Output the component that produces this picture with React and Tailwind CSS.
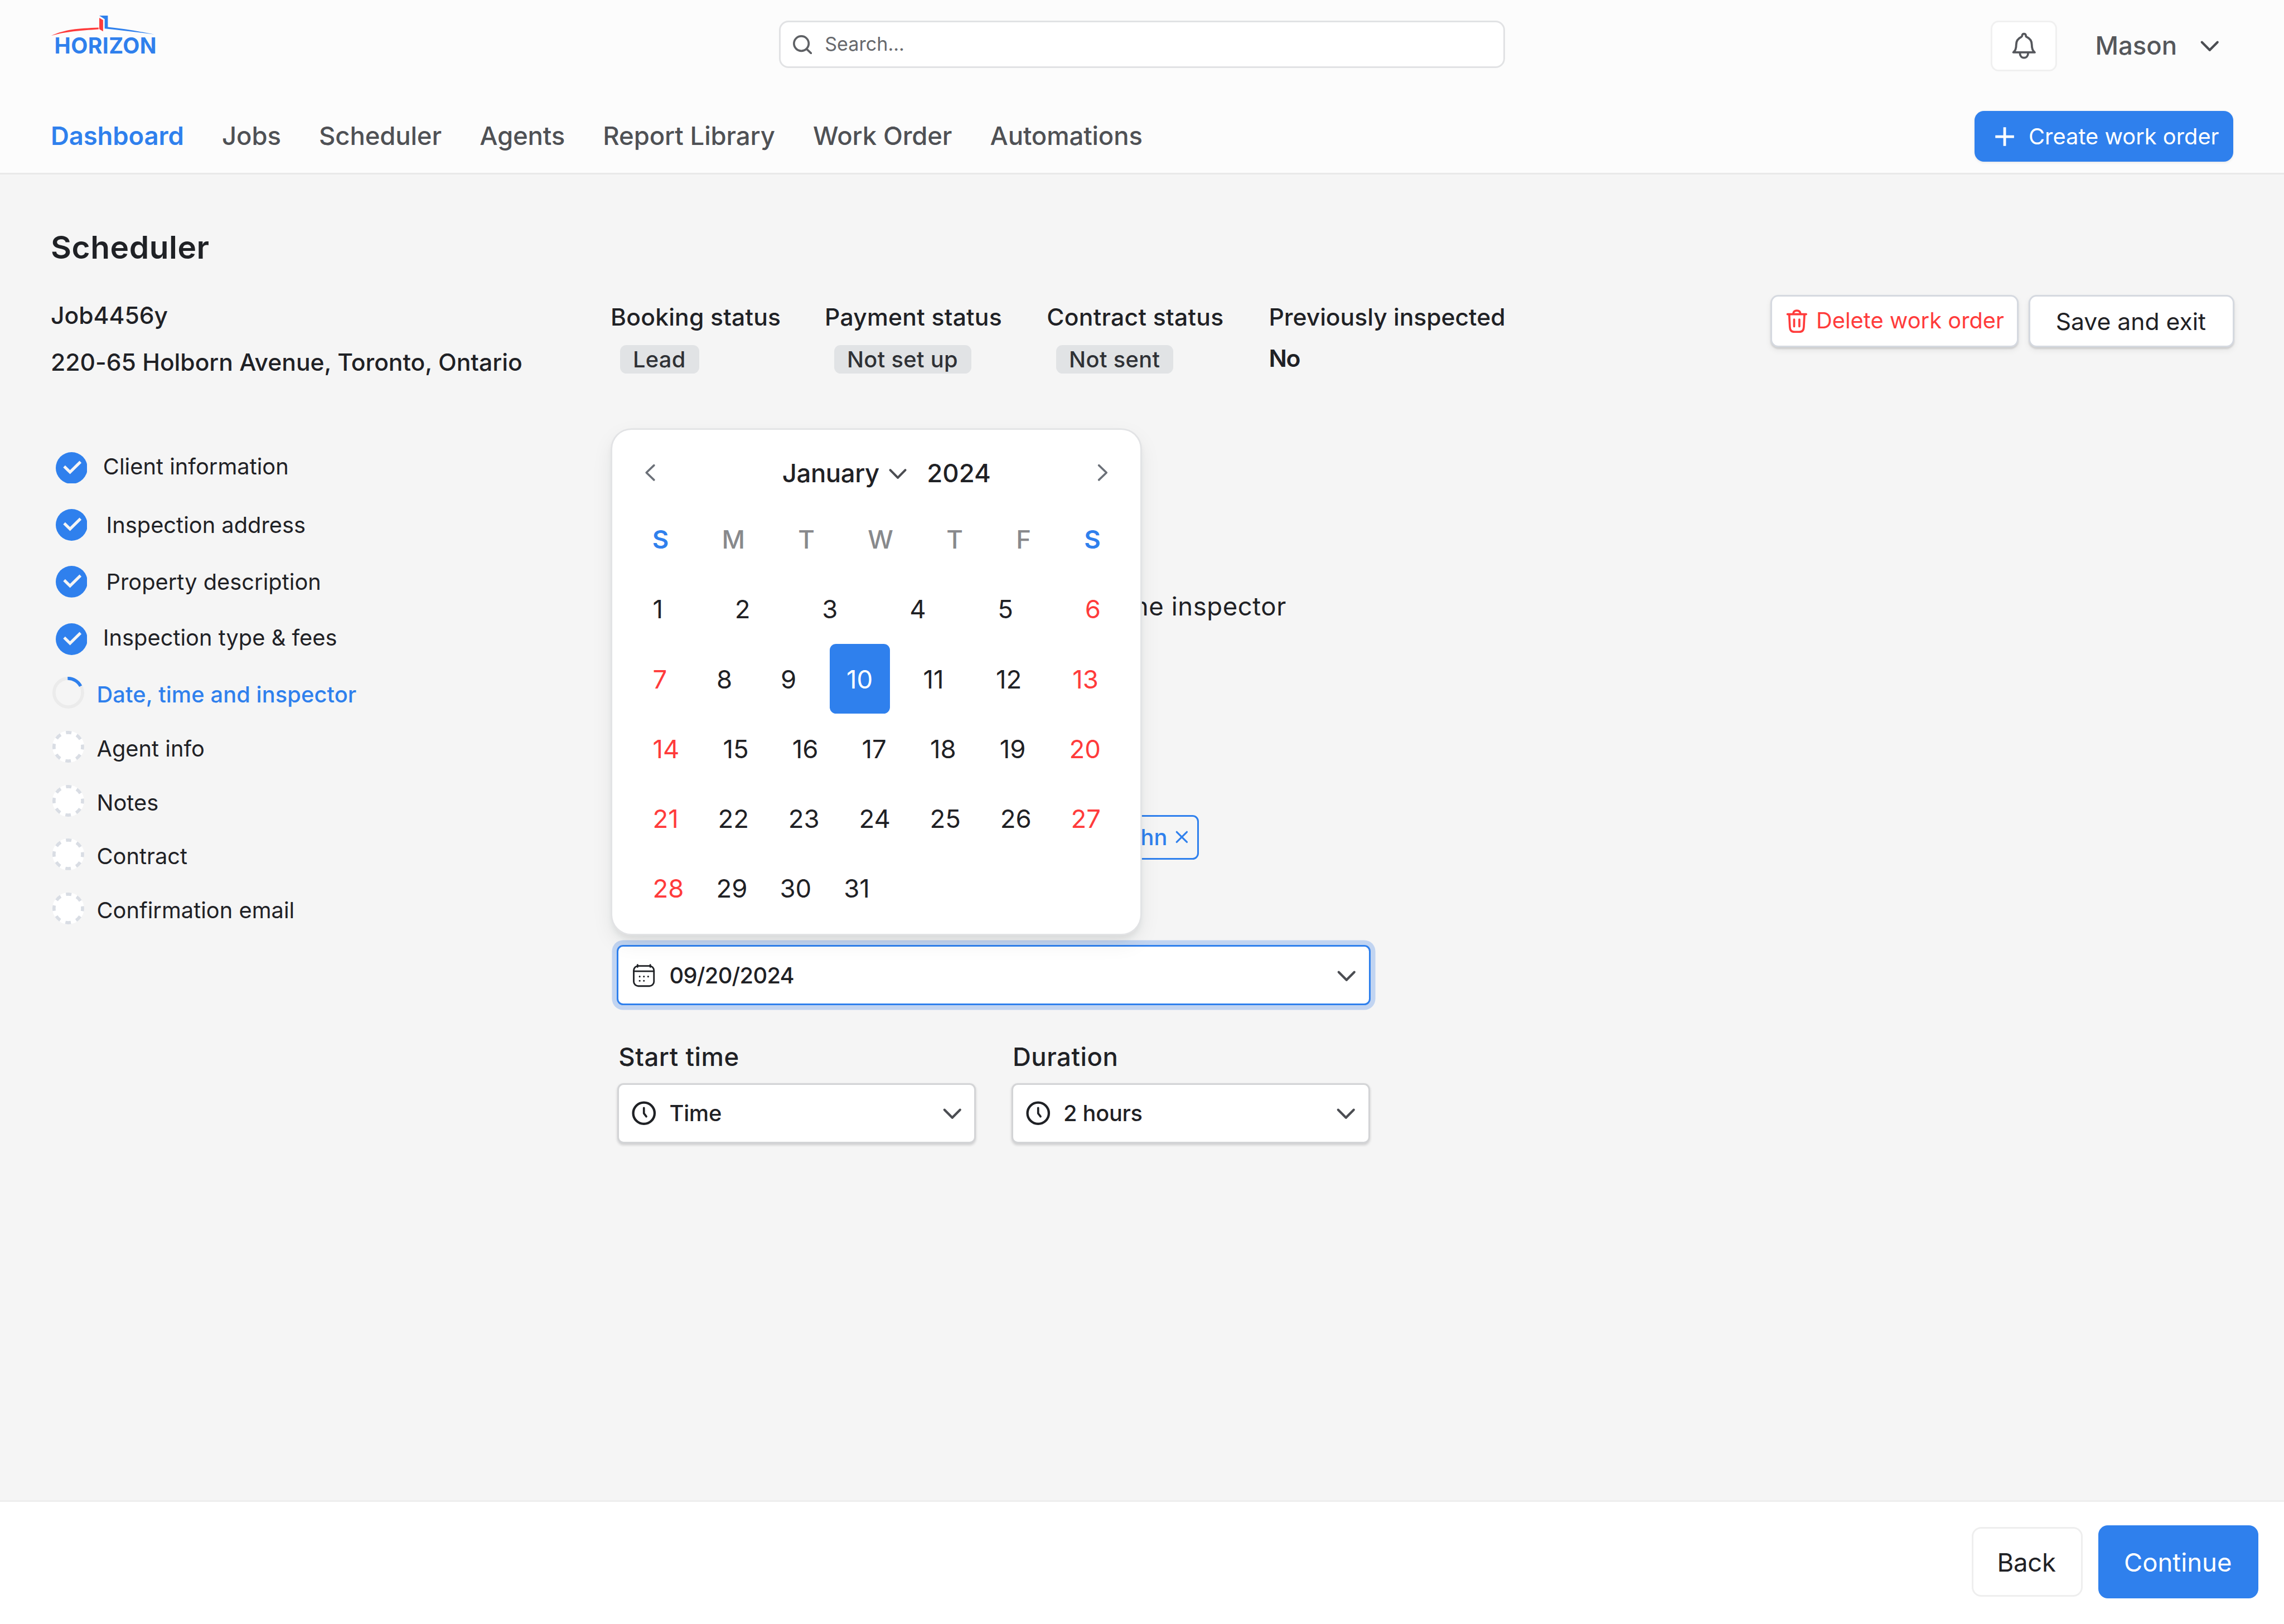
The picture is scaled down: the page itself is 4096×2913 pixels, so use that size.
import { useState } from "react";

// --- DATA ---
const navItems = ["Dashboard", "Jobs", "Scheduler", "Agents", "Report Library", "Work Order", "Automations"];

const statuses = [
  { label: "Booking status", value: "Lead", badge: true, width: "w-[135px] tracking-[0.004em]" },
  { label: "Payment status", value: "Not set up", badge: true, width: "w-[140px] tracking-[0.005em]" },
  { label: "Contract status", value: "Not sent", badge: true, width: "w-[140px] tracking-[0.006em]" },
  { label: "Previously inspected", value: "No", badge: false, width: "w-[160px] tracking-[-0.001em]" },
];

const steps = [
  { label: "Client information", state: "done", text: "ml-[10px] pb-[1.4px]" },
  { label: "Inspection address", state: "done", text: "ml-[12px] pt-[0.8px]" },
  { label: "Property description", state: "done", text: "ml-[12px] pt-[0.6px]" },
  { label: "Inspection type & fees", state: "done", text: "ml-[10px] pb-[1.4px]" },
  { label: "Date, time and inspector", state: "current", text: "ml-[8px] pt-[2.6px] font-medium tracking-[0.002em] text-[#2f80ed]" },
  { label: "Agent info", state: "todo", text: "ml-[8px] pt-[2.8px]" },
  { label: "Notes", state: "todo", text: "ml-[8px] pt-[2.8px]" },
  { label: "Contract", state: "todo", text: "ml-[8px] pt-[2.8px]" },
  { label: "Confirmation email", state: "todo", text: "ml-[8px] pt-[2.8px]" },
];

const weekDays = ["S", "M", "T", "W", "T", "F", "S"];

const weeks = [
  { days: [1, 2, 3, 4, 5, 6], layout: "flex justify-between" },
  { days: [7, 8, 9, 10, 11, 12, 13], layout: "grid grid-cols-[40.3px_40.4px_30.8px_59px_45.9px_48.3px_auto] justify-items-start" },
  { days: [14, 15, 16, 17, 18, 19, 20], layout: "flex justify-between" },
  { days: [21, 22, 23, 24, 25, 26, 27], layout: "flex justify-between" },
  { days: [28, 29, 30, 31], layout: "flex gap-[20.4px]" },
];

const weekendDays = [6, 7, 13, 14, 20, 21, 27, 28];

// --- ICONS ---
const ChevronDown = ({ className = "size-4 text-[#4b4d52]" }) => (
  <svg className={`shrink-0 ${className}`} viewBox="0 0 16 16" fill="none" stroke="currentColor" strokeWidth="1.5" strokeLinecap="round" strokeLinejoin="round">
    <path d="M3.1 5.5 8 10.5l4.9-5" />
  </svg>
);

const ChevronSide = ({ right }) => (
  <svg className="size-4 shrink-0 text-[#6b7078]" viewBox="0 0 16 16" fill="none" stroke="currentColor" strokeWidth="1.3" strokeLinecap="round" strokeLinejoin="round">
    <path d={right ? "M5.5 3.4 10.3 8l-4.8 4.6" : "M10.5 3.4 5.7 8l4.8 4.6"} />
  </svg>
);

const BellIcon = () => (
  <svg className="h-[18px] w-4" viewBox="96 32 192 216" fill="none" stroke="#55575c" strokeWidth="16" strokeLinejoin="round">
    <path d="M111 188h162c-15-11-22-26-22-58 0-27-13-47-37-58-6-3-8-7-8-12-1-8-6-13-14-13s-13 5-14 13c0 5-2 9-8 12-24 11-37 31-37 58 0 32-7 47-22 58Z" />
    <path d="M161 192c0 23 13 37 31 37s31-14 31-37" />
  </svg>
);

const CalendarIcon = () => (
  <svg className="size-4 shrink-0" viewBox="96 84 192 192" fill="none" stroke="#1f2125" strokeWidth="12" strokeLinecap="round">
    <rect x="115" y="108" width="153" height="152" rx="34" />
    <path d="M115 148h153M144 100v16M240 100v16" />
    <g fill="#1f2125" stroke="none">
      <circle cx="160" cy="188" r="6.5" />
      <circle cx="192" cy="188" r="6.5" />
      <circle cx="224" cy="188" r="6.5" />
      <circle cx="160" cy="220" r="6.5" />
      <circle cx="192" cy="220" r="6.5" />
    </g>
  </svg>
);

const ClockIcon = () => (
  <svg className="size-4 shrink-0" viewBox="0 0 16 16" fill="none" stroke="#1f2125" strokeWidth="1.5" strokeLinecap="round" strokeLinejoin="round">
    <circle cx="8" cy="8" r="6.75" />
    <path d="M8 4.7V8.1l1.5 2" strokeWidth="1.3" />
  </svg>
);

const TrashIcon = () => (
  <svg className="h-[15px] w-[13.5px] shrink-0" viewBox="0 0 13.5 15" fill="none" stroke="#ff3b3b" strokeWidth="1.3" strokeLinecap="round" strokeLinejoin="round">
    <path d="M.9 3h11.8M4.5 2.8C4.6 1.5 5.5.75 6.8.75S9 1.5 9.1 2.8M2 3.2l.4 7.9c.1 2.1 1 3.1 2.9 3.1h3c1.9 0 2.8-1 2.9-3.1l.4-7.9M5.1 6.4v4.3M8.4 6.4v4.3" />
  </svg>
);

const StepIcon = ({ state }) => {
  if (state === "done") {
    return (
      <svg className="size-5 shrink-0" viewBox="0 0 20 20" fill="none">
        <circle cx="10" cy="10" r="10" fill="#2f80ed" />
        <path d="M5.3 9 9 12.6l6.6-6.5" stroke="#f5f5f5" strokeWidth="1.8" />
      </svg>
    );
  }
  if (state === "current") {
    return (
      <svg className="size-5 shrink-0" viewBox="0 0 20 20" fill="none" strokeWidth="2">
        <circle cx="10" cy="10" r="9" stroke="#ebebeb" />
        <path d="M9.6 1A9 9 0 0 1 17.8 5.9" stroke="#2f80ed" />
      </svg>
    );
  }
  return (
    <svg className="size-5 shrink-0" viewBox="0 0 20 20" fill="none">
      <circle cx="10" cy="10" r="10" fill="#fff" />
      <circle cx="10" cy="10" r="9" stroke="#d9dde4" strokeWidth="2" strokeDasharray="3.534 3.534" strokeDashoffset="1.767" />
    </svg>
  );
};

const Logo = () => (
  <div className="-mt-[3px] flex w-[66px] flex-col">
    <svg className="h-[13px] w-[66px]" viewBox="32 10 66 13">
      <path d="M62.6 10H68v7.2c9 .9 19.5 2.6 29.5 4.7-11-1.5-21-2.6-31.5-3.7v-6l-3.4-2.2Z" fill="#2f80ed" />
      <path d="M62.6 11.4 65 12.8v7.1l-2.4-1.4Z" fill="#ff3b3b" />
      <path d="M32.3 22.7C41 18.7 49 18.1 62.2 17.6v1C50 19.5 42 19.9 32.3 22.7Z" fill="#ff3b3b" />
    </svg>
    <span className="mt-[0.3px] ml-[2.3px] text-[13.75px] leading-[11.5px] font-bold tracking-[0.01em] text-[#2f80ed]">HORIZON</span>
  </div>
);

// --- HEADER ---
const Header = () => (
  <header className="h-[110px] border-b-[1.06px] border-[#e9e9e9] bg-[#fcfcfc]">
    <div className="flex h-[70px] items-start pt-[13px] pr-[39px] pl-8">
      <Logo />
      <div className="ml-[393px] flex h-[30px] w-[458px] items-center gap-2 rounded-[6px] border-[1.06px] border-[#e1e2e4] bg-white pl-2">
        <svg className="size-3" viewBox="0 0 12 12" fill="none" stroke="#5f6165" strokeWidth="1.3" strokeLinecap="round">
          <circle cx="5.3" cy="5.3" r="4.65" />
          <path d="m8.9 9 2.5 2.4" />
        </svg>
        <span className="pb-[0.6px] text-[12px] leading-4 text-[#66686c]">Search...</span>
      </div>
      <button className="ml-[306px] flex h-8 w-[42px] items-center justify-center rounded-[5px] border-[1.06px] border-[#f0f0f0] bg-white">
        <BellIcon />
      </button>
      <div className="ml-6 flex h-8 flex-1 items-center justify-between text-[16px] font-medium text-[#55575b]">
        <span className="leading-6">Mason</span>
        <ChevronDown />
      </div>
    </div>
    <div className="flex h-8 items-center justify-between px-8">
      <nav className="flex gap-6 pb-[0.5px] text-[16px] leading-6 tracking-[-0.003em]">
        {navItems.map((item, i) => (
          <a key={item} className={i === 0 ? "font-semibold text-[#2f80ed]" : "font-medium text-[#4f5155]"}>
            {item}
          </a>
        ))}
      </nav>
      <button className="flex h-8 w-[163px] items-center gap-[9px] rounded-[6px] bg-[#2f80ed] pl-[13px] text-[14px] text-white shadow-[0_0.5px_1.5px_rgba(0,0,0,0.08)]">
        <svg className="size-3" viewBox="0 0 12 12" stroke="#fff" strokeWidth="1.7">
          <path d="M6 .1v11.8M.1 6h11.8" />
        </svg>
        Create work order
      </button>
    </div>
  </header>
);

// --- CALENDAR POPOVER ---
const CalendarPopover = ({ selected, onSelect }) => (
  <div className="absolute top-[29px] -left-[3px] z-10 h-[318px] w-[333px] rounded-[12px] bg-white pr-[25px] pl-[25.5px] shadow-[0_0_0_1px_#e2e3e5,0_3px_4px_rgba(31,33,37,0.08),0_5px_14px_rgba(31,33,37,0.08)]">
    <div className="mt-[11px] mb-1 -mr-[9.3px] -ml-[9.8px] flex h-8 items-center text-[16px] leading-6 font-medium text-[#1f2125]">
      <ChevronSide />
      <span className="ml-[75.5px] pt-[1px] tracking-[-0.01em]">January</span>
      <ChevronDown className="mt-[1.6px] ml-[3.8px] size-[15.5px] text-[#4b4d52]" />
      <span className="ml-[10.8px] pt-[1px]">2024</span>
      <span className="ml-auto">
        <ChevronSide right />
      </span>
    </div>
    <div className="-ml-[0.3px] flex h-11 items-center justify-between pt-[1px] text-[16px] font-medium text-[#88898c]">
      {weekDays.map((day, i) => (
        <span key={i} className={day === "S" ? "font-semibold text-[#2f80ed]" : ""}>
          {day}
        </span>
      ))}
    </div>
    {weeks.map(({ days, layout }) => (
      <div key={days[0]} className={`h-11 items-center text-[16px] text-[#1f2125] ${layout}`}>
        {days.map((day) => (
          <button
            key={day}
            onClick={() => onSelect(day)}
            className={
              selected === day
                ? "h-11 w-[38px] rounded-[4px] bg-[#2f80ed] pt-[1px] text-white"
                : weekendDays.includes(day)
                  ? "pt-[1px] text-[#ff3b3b]"
                  : "pt-[1px]"
            }
          >
            {day}
          </button>
        ))}
      </div>
    ))}
  </div>
);

const TimeSelect = ({ label, value }) => (
  <div className="w-[226px]">
    <p className="ml-[0.7px] pt-[0.6px] text-[16px] leading-6 font-medium tracking-[0.012em]">{label}</p>
    <div className="mt-[4.4px] flex h-[38px] items-center rounded-[4px] border-[1.06px] border-[#d3d4d6] bg-white pr-[6px] pl-[7.7px] shadow-[0_1px_1.5px_rgba(31,33,37,0.18)]">
      <ClockIcon />
      <span className="ml-2 text-[14px] font-medium tracking-[-0.008em]">{value}</span>
      <ChevronDown className="mt-px ml-auto size-4 text-[#4b4d52]" />
    </div>
  </div>
);

export default function App() {
  const [selectedDay, setSelectedDay] = useState(10);

  return (
    <div className="flex h-[1024.1px] w-[1440px] flex-col overflow-hidden bg-[#f5f5f5] font-['Inter',sans-serif] text-[#1f2125] [zoom:2.84444]">
      <Header />

      <main className="h-[836px] pt-8 pr-[31.4px] pl-8">
        <h1 className="text-[20px] leading-7 font-semibold tracking-[0.009em]">Scheduler</h1>

        {/* Job summary */}
        <div className="mt-4 flex h-14 items-start">
          <div className="w-[353px] pt-[0.9px] text-[15px] leading-6 font-medium tracking-[-0.001em]">
            <p>Job4456y</p>
            <p className="mt-[5.8px]">220-65 Holborn Avenue, Toronto, Ontario</p>
          </div>
          {statuses.map((s) => (
            <div key={s.label} className={`${s.width} pt-[2.2px] text-[15px] font-medium whitespace-nowrap`}>
              <p className="leading-6">{s.label}</p>
              {s.badge ? (
                <span className="mt-[5.3px] ml-[6px] block h-[18px] w-fit rounded-[4px] bg-[#e1e3e5] pr-[8.4px] pl-2 text-[14px] leading-[18px] tracking-[0.008em] text-[#2f3135]">
                  {s.value}
                </span>
              ) : (
                <span className="mt-[4.8px] block leading-[18px] font-semibold tracking-[-0.03em]">{s.value}</span>
              )}
            </div>
          ))}
          <div className="ml-auto flex gap-[6.5px]">
            <button className="flex h-[33px] w-[156.4px] items-center gap-[5.5px] rounded-[5px] border-[1.06px] border-[#d5d9e0] bg-white pl-[8.8px] text-[14px] whitespace-nowrap text-[#ff3b3b] shadow-[0_1px_1px_rgba(0,0,0,0.12),0_2px_4px_rgba(0,0,0,0.06)]">
              <TrashIcon />
              <span className="pb-[1px]">Delete work order</span>
            </button>
            <button className="h-[33px] w-[129.5px] rounded-[5px] border-[1.06px] border-[#d5d9e0] bg-white pt-[0.6px] pr-[0.8px] text-[15px] shadow-[0_1px_1px_rgba(0,0,0,0.12),0_2px_4px_rgba(0,0,0,0.06)]">
              Save and exit
            </button>
          </div>
        </div>

        <div className="flex items-start">
          {/* Steps */}
          <ul className="w-[357px] pt-[43px]">
            {steps.map((step) => (
              <li
                key={step.label}
                className={
                  step.state === "done"
                    ? "mb-4 ml-[3px] flex h-5 items-center text-[14px] leading-5 nth-[4]:mb-[14px]"
                    : "mb-[14px] ml-px flex h-5 items-center text-[14px] leading-5"
                }
              >
                <StepIcon state={step.state} />
                <span className={step.text}>{step.label}</span>
              </li>
            ))}
          </ul>

          {/* Form */}
          <div className="relative w-[475px] pt-[128.5px]">
            <p className="w-[422px] text-right text-[16px] leading-6 tracking-[0.012em]">the inspector</p>
            <div className="mt-[119.5px] ml-[295px] flex h-7 w-[72px] items-center justify-end gap-[5px] rounded-[4px] border-[1.06px] border-[#2f80ed] pr-[6px] text-[14px] font-medium text-[#2f80ed]">
              John
              <svg className="size-2" viewBox="0 0 8 8" stroke="#2f80ed" strokeWidth="1.1" strokeLinecap="round">
                <path d="m.8.8 6.4 6.4M7.2.8.8 7.2" />
              </svg>
            </div>

            <div className="mt-[54px] flex h-[38px] items-center rounded-[4px] border-[1.06px] border-[#2f80ed] bg-white pr-[6px] pl-2 shadow-[0_0_0_3px_#c1d4f1]">
              <CalendarIcon />
              <span className="ml-2 pt-[0.6px] text-[14px] font-medium tracking-[-0.018em]">09/20/2024</span>
              <ChevronDown className="mt-px ml-auto size-4 text-[#4b4d52]" />
            </div>

            <div className="mt-5 flex justify-between px-[0.3px]">
              <TimeSelect label="Start time" value="Time" />
              <TimeSelect label="Duration" value="2 hours" />
            </div>

            <CalendarPopover selected={selectedDay} onSelect={setSelectedDay} />
          </div>
        </div>
      </main>

      <footer className="flex flex-1 items-start justify-end gap-[10px] border-t-[1.06px] border-[#eeeeee] bg-white pt-[15px] pr-4 text-[16px]">
        <button className="mt-px h-11 w-[70px] rounded-[6px] border-[1.06px] border-[#eeeeee] bg-white pt-[0.6px] pr-[0.8px] tracking-[-0.006em]">Back</button>
        <button className="h-[46px] w-[101px] rounded-[6px] bg-[#2f80ed] pt-[0.6px] pr-[0.8px] text-white">Continue</button>
      </footer>
    </div>
  );
}
